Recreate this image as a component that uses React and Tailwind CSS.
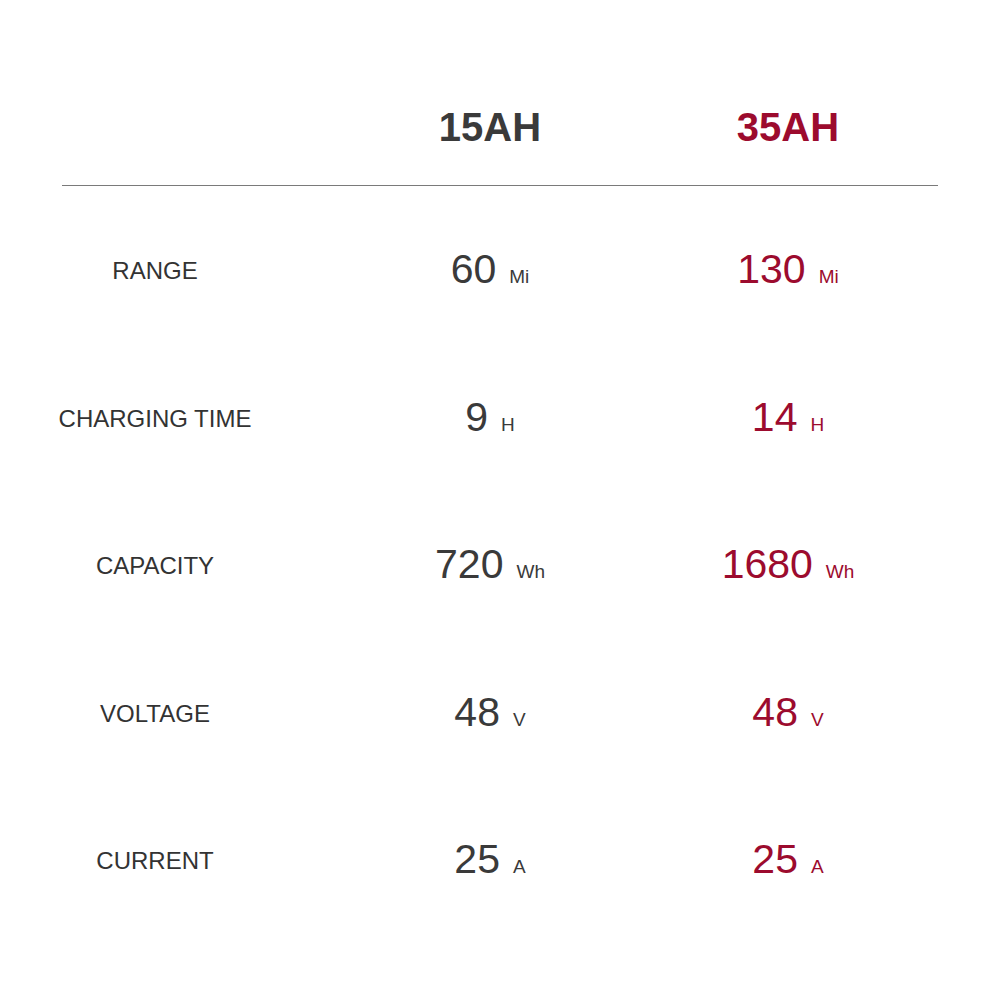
const rows = [
  { label: "RANGE", a: "60", b: "130", unit: "Mi" },
  { label: "CHARGING TIME", a: "9", b: "14", unit: "H" },
  { label: "CAPACITY", a: "720", b: "1680", unit: "Wh" },
  { label: "VOLTAGE", a: "48", b: "48", unit: "V" },
  { label: "CURRENT", a: "25", b: "25", unit: "A" },
];

function Value({ value, unit, red }) {
  return (
    <div
      className={`w-[298px] flex justify-center items-baseline ${
        red ? "text-[#9c0b2e]" : "text-[#3a3a3a]"
      }`}
    >
      <span className="text-[41px] leading-none">{value}</span>
      <span className="text-[19px] ml-[13px] leading-none">{unit}</span>
    </div>
  );
}

export default function App() {
  return (
    <div className="w-[1000px] h-[1000px] bg-white px-[62px] font-['Liberation_Sans',Arial,sans-serif]">
      <div className="h-[186px] border-b border-[#7a7a7a] flex pt-[105px]">
        <div className="w-[279px]" />
        <div className="w-[298px] text-center text-[40px] leading-[44px] font-bold text-[#3a3a3a]">
          15AH
        </div>
        <div className="w-[298px] text-center text-[40px] leading-[44px] font-bold text-[#9c0b2e]">
          35AH
        </div>
      </div>
      <div className="pt-[10px]">
        {rows.map((row) => (
          <div key={row.label} className="h-[147.5px] flex items-center">
            <div className="w-[186px] shrink-0 whitespace-nowrap flex justify-center text-[24px] text-[#333] mr-[93px] pt-[3px]">
              {row.label}
            </div>
            <Value value={row.a} unit={row.unit} />
            <Value value={row.b} unit={row.unit} red />
          </div>
        ))}
      </div>
    </div>
  );
}
